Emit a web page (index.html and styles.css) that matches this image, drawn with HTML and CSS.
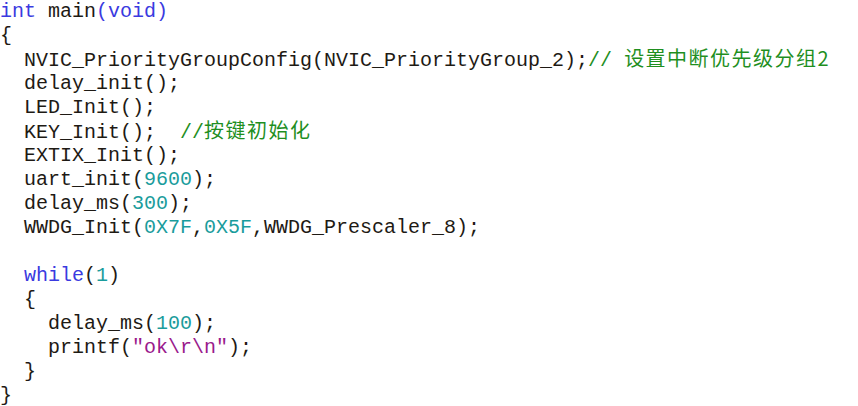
FILE: index.html
```html
<!DOCTYPE html>
<html>
<head>
<meta charset="utf-8">
<link rel="stylesheet" href="styles.css">
</head>
<body>
<div class="code">
<div class="ln"><span class="kw">int</span> main<span class="kw">(void)</span></div>
<div class="ln">{</div>
<div class="ln">  NVIC_PriorityGroupConfig(NVIC_PriorityGroup_2);<span class="cm">// <span class="zh">设置中断优先级分组2</span></span></div>
<div class="ln">  delay_init();</div>
<div class="ln">  LED_Init();</div>
<div class="ln">  KEY_Init();  <span class="cm">//<span class="zh">按键初始化</span></span></div>
<div class="ln">  EXTIX_Init();</div>
<div class="ln">  uart_init(<span class="num">9600</span>);</div>
<div class="ln">  delay_ms(<span class="num">300</span>);</div>
<div class="ln">  WWDG_Init(<span class="num">0X7F</span>,<span class="num">0X5F</span>,WWDG_Prescaler_8);</div>
<div class="ln"> </div>
<div class="ln">  <span class="kw">while</span>(<span class="num">1</span>)</div>
<div class="ln">  {</div>
<div class="ln">    delay_ms(<span class="num">100</span>);</div>
<div class="ln">    printf(<span class="str">"ok\r\n"</span>);</div>
<div class="ln">  }</div>
<div class="ln">}</div>
</div>
</body>
</html>
```
FILE: styles.css
```css
html, body {
  margin: 0;
  padding: 0;
  background: #ffffff;
}
.code {
  font-family: "Liberation Mono", "Courier New", monospace;
  font-size: 20px;
  color: #1e1a14;
}
.ln {
  height: 24px;
  line-height: 24px;
  white-space: pre;
}
.kw { color: #3a3ae0; }
.num { color: #1a9c9c; }
.str { color: #9a1a8c; }
.cm { color: #1f8f1f; }
.zh {
  font-family: "Noto Sans CJK SC", sans-serif;
  font-size: 20px;
  line-height: 1;
  letter-spacing: 1.5px;
}
```
